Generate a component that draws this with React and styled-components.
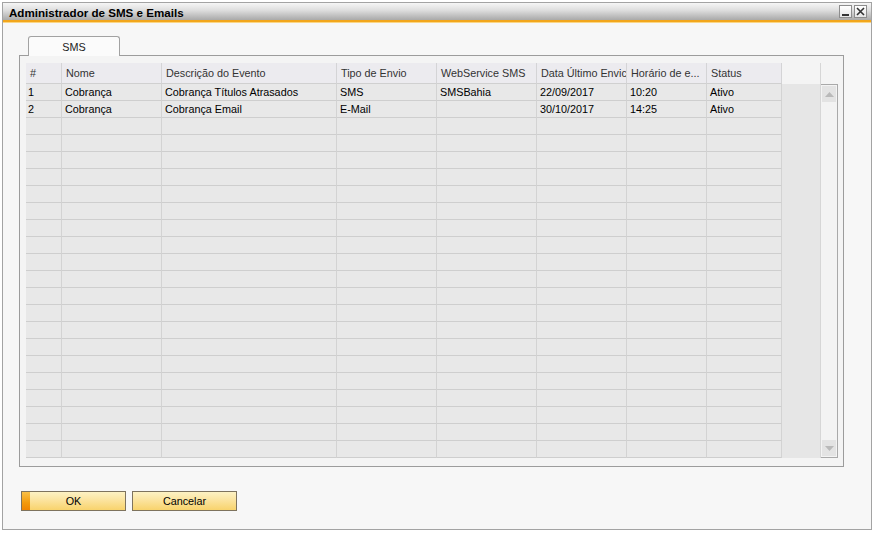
import React from 'react';
import styled, { createGlobalStyle } from 'styled-components';

const GlobalStyle = createGlobalStyle`
    html, body {
        margin: 0;
        padding: 0;
        background: #ffffff;
    }
    body {
        font-family: "Liberation Sans", Arial, sans-serif;
        font-size: 10.8px;
        color: #000;
    }
`

const columns = [
    { title: '#', width: 36 },
    { title: 'Nome', width: 100 },
    { title: 'Descrição do Evento', width: 175 },
    { title: 'Tipo de Envio', width: 100 },
    { title: 'WebService SMS', width: 100 },
    { title: 'Data Último Envic', width: 90 },
    { title: 'Horário de e...', width: 80 },
    { title: 'Status', width: 75 },
];

const rows = [
    ['1', 'Cobrança', 'Cobrança Títulos Atrasados', 'SMS', 'SMSBahia', '22/09/2017', '10:20', 'Ativo'],
    ['2', 'Cobrança', 'Cobrança Email', 'E-Mail', '', '30/10/2017', '14:25', 'Ativo'],
];

const ROW_COUNT = 22;

const Window = styled.div`
    margin: 2px 0 0 2px;
    width: 868px;
    height: 526px;
    border: 1px solid #a3a3a3;
    background: #f7f7f7;
    display: flex;
    flex-direction: column;
`

const TitleBar = styled.div`
    height: 17px;
    display: flex;
    align-items: center;
    padding: 0 4px 0 6px;
    background: linear-gradient(#f6f6f6, #dcdcdc 45%, #a9a9a9);
    border-bottom: 2px solid #f2a61c;
    box-shadow: 0 1px 0 #fbd684;
`

const Title = styled.div`
    flex: 1;
    font-weight: bold;
    font-size: 11.6px;
    color: #000;
    padding-top: 1px;
`

const WinButton = styled.div`
    width: 11px;
    height: 11px;
    margin-left: 2px;
    border: 1px solid #8d8d8d;
    background: linear-gradient(#ffffff, #e6e6e6);
    display: flex;
    align-items: center;
    justify-content: center;
`

const Content = styled.div`
    flex: 1;
    display: flex;
    flex-direction: column;
    padding: 14px 0 0 16px;
`

const TabStrip = styled.div`
    display: flex;
    padding-left: 9px;
    position: relative;
    z-index: 1;
    margin-bottom: -1px;
`

const Tab = styled.div`
    width: 90px;
    height: 19px;
    border: 1px solid #a2a2a2;
    border-bottom: none;
    border-radius: 3px 3px 0 0;
    background: #fbfbfb;
    display: flex;
    align-items: center;
    justify-content: center;
    color: #222;
`

const Panel = styled.div`
    box-sizing: border-box;
    width: 825px;
    height: 412px;
    border: 1px solid #9c9c9c;
    background: #f4f4f4;
    padding: 7px 4px 0 6px;
    display: flex;
`

const Grid = styled.div`
    display: flex;
    flex: 1;
    height: 395px;
`

const TableArea = styled.div`
    width: 794px;
    display: flex;
    flex-direction: column;
    border-right: 1px solid #d6d6d6;
`

const HeaderRow = styled.div`
    display: flex;
    height: 21px;
`

const HeaderCell = styled.div`
    width: ${p => p.$w}px;
    box-sizing: border-box;
    background: #ecebef;
    border-right: 1px solid #d4d4d6;
    border-bottom: 1px solid #d0d0d0;
    padding: 0 0 0 4px;
    display: flex;
    align-items: center;
    color: #333;
    white-space: nowrap;
    overflow: hidden;
`

const HeaderFiller = styled.div`
    flex: 1;
    background: #f4f4f4;
`

const Row = styled.div`
    display: flex;
    height: 17px;
    background: #e6e6e6;
`

const Cell = styled.div`
    width: ${p => p.$w}px;
    box-sizing: border-box;
    background: #e8e8e8;
    border-right: 1px solid #d3d3d3;
    border-bottom: 1px solid #cecece;
    padding: 0 0 0 2px;
    display: flex;
    align-items: center;
    white-space: nowrap;
    overflow: hidden;
    &:nth-child(n+2) {
        padding-left: 3px;
    }
`

const ScrollColumn = styled.div`
    width: 17px;
    display: flex;
    flex-direction: column;
    padding-top: 21px;
`

const ScrollTrack = styled.div`
    flex: 1;
    border: 1px solid #a9a9a9;
    border-left: none;
    background: #f3f3f3;
    display: flex;
    flex-direction: column;
    justify-content: space-between;
    padding: 1px;
`

const ScrollButton = styled.div`
    height: 16px;
    background: #e3e3e3;
    display: flex;
    align-items: center;
    justify-content: center;
`

const ButtonBar = styled.div`
    display: flex;
    gap: 6px;
    margin: 24px 0 0 2px;
`

const Button = styled.div`
    position: relative;
    width: 103px;
    height: 18px;
    border: 1px solid #7e735e;
    background: linear-gradient(#fdf2c4, #fbe29a 50%, #f8d36c);
    display: flex;
    align-items: center;
    justify-content: center;
    color: #000;

    &::before {
        content: '';
        display: ${p => (p.$primary ? 'block' : 'none')};
        position: absolute;
        left: 0;
        top: 0;
        bottom: 0;
        width: 8px;
        background: linear-gradient(#f9c048, #f39a0c 60%, #f08400);
    }
`

const Arrow = ({ up }) => (
    <svg width="9" height="5" viewBox="0 0 9 5">
        <polygon points={up ? '0,5 9,5 4.5,0' : '0,0 9,0 4.5,5'} fill="#b9b9b9" />
    </svg>
);

const App = () => {
    const filled = [...rows];
    while (filled.length < ROW_COUNT) filled.push(columns.map(() => ''));

    return (
        <>
            <GlobalStyle />
            <Window>
                <TitleBar>
                    <Title>Administrador de SMS e Emails</Title>
                    <WinButton>
                        <svg width="9" height="9" viewBox="0 0 9 9">
                            <rect x="1" y="7" width="7" height="2" fill="#333" />
                        </svg>
                    </WinButton>
                    <WinButton>
                        <svg width="9" height="9" viewBox="0 0 9 9">
                            <path d="M1 1 L8 8 M8 1 L1 8" stroke="#333" strokeWidth="1.6" />
                        </svg>
                    </WinButton>
                </TitleBar>
                <Content>
                    <TabStrip>
                        <Tab>SMS</Tab>
                    </TabStrip>
                    <Panel>
                        <Grid>
                            <TableArea>
                                <HeaderRow>
                                    {columns.map(c => (
                                        <HeaderCell key={c.title} $w={c.width}>{c.title}</HeaderCell>
                                    ))}
                                    <HeaderFiller />
                                </HeaderRow>
                                {filled.map((r, i) => (
                                    <Row key={i}>
                                        {r.map((v, j) => (
                                            <Cell key={j} $w={columns[j].width}>{v}</Cell>
                                        ))}
                                    </Row>
                                ))}
                            </TableArea>
                            <ScrollColumn>
                                <ScrollTrack>
                                    <ScrollButton><Arrow up /></ScrollButton>
                                    <ScrollButton><Arrow /></ScrollButton>
                                </ScrollTrack>
                            </ScrollColumn>
                        </Grid>
                    </Panel>
                    <ButtonBar>
                        <Button $primary>OK</Button>
                        <Button>Cancelar</Button>
                    </ButtonBar>
                </Content>
            </Window>
        </>
    );
};

export default App;
